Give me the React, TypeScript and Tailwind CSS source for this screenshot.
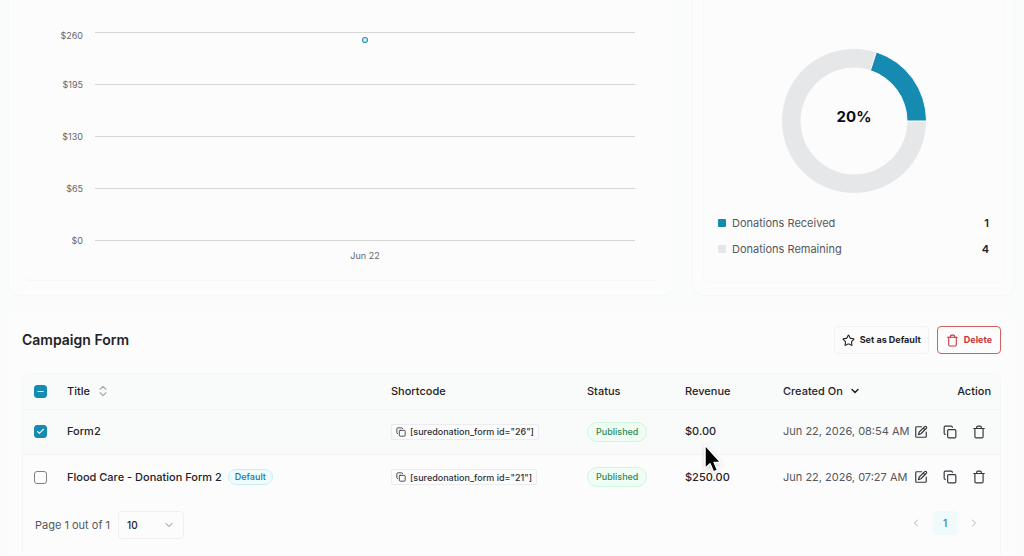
import { useState } from "react";
import {
  Check,
  ChevronDown,
  ChevronLeft,
  ChevronRight,
  ChevronsUpDown,
  Copy,
  Minus,
  Star,
  Trash,
} from "lucide-react";

type Form = {
  id: string;
  title: string;
  isDefault: boolean;
  revenue: string;
  created: string;
};

const forms: Form[] = [
  { id: "26", title: "Form2", isDefault: false, revenue: "$0.00", created: "Jun 22, 2026, 08:54 AM" },
  { id: "21", title: "Flood Care - Donation Form 2", isDefault: true, revenue: "$250.00", created: "Jun 22, 2026, 07:27 AM" },
];

const ticks = [
  { label: "$260", y: 32, text: 35 },
  { label: "$195", y: 84, text: 84 },
  { label: "$130", y: 136, text: 136 },
  { label: "$65", y: 188, text: 188 },
  { label: "$0", y: 240, text: 240 },
];

function RevenueChart() {
  return (
    <svg viewBox="0 0 638 280" className="block h-auto w-full" role="img" aria-label="Revenue">
      {ticks.map((t) => (
        <g key={t.label}>
          <line x1="73" x2="613" y1={t.y + 0.5} y2={t.y + 0.5} stroke="#d5d6d8" />
          <text x="61" y={t.text} textAnchor="end" dominantBaseline="central" fontSize="9" fill="#64676d">
            {t.label}
          </text>
        </g>
      ))}
      <circle cx="343" cy="40" r="2.5" fill="#d3f2fb" stroke="#3f93b0" strokeWidth="1.2" />
      <text x="343" y="255" textAnchor="middle" dominantBaseline="central" fontSize="9" fill="#64676d">
        Jun 22
      </text>
    </svg>
  );
}

function Donut() {
  return (
    <svg viewBox="0 0 146 146" className="mx-auto block size-[146px]" role="img" aria-label="20% of donations received">
      <g stroke="#fcfcfc" strokeWidth="1">
        <path d="M145.500 73A72.500 72.500 0 1 1 95.400 4L89.400 22.600A53 53 0 1 0 126 73Z" fill="#e5e7e9" />
        <path d="M145.500 73A72.500 72.500 0 0 0 95.400 4L89.400 22.600A53 53 0 0 1 126 73Z" fill="#168bb2" />
      </g>
      <text x="73" y="68" textAnchor="middle" dominantBaseline="central" fontSize="15" fontWeight="700" fill="#0b0d11">
        20%
      </text>
    </svg>
  );
}

function Tick({
  label,
  checked,
  mixed = false,
  onChange,
}: {
  label: string;
  checked: boolean;
  mixed?: boolean;
  onChange: () => void;
}) {
  const Icon = mixed ? Minus : Check;
  return (
    <span className="relative block size-[13px]">
      <input
        type="checkbox"
        aria-label={label}
        checked={checked}
        onChange={onChange}
        className="block size-[13px] appearance-none rounded-[3px] border border-[#7d8086] bg-[#fcfcfc] checked:border-[#168bb2] checked:bg-[#168bb2]"
      />
      {checked && (
        <Icon className="pointer-events-none absolute inset-0 m-auto size-[9px] text-[#e3f4f9]" strokeWidth={3} />
      )}
    </span>
  );
}

function EditIcon() {
  return (
    <svg viewBox="0 0 24 24" className="size-[14px]" fill="none" stroke="currentColor" strokeWidth="2" strokeLinecap="round" strokeLinejoin="round" aria-hidden="true">
      <path d="M13 3H4.500A1.500 1.500 0 0 0 3 4.500V19.500A1.500 1.500 0 0 0 4.500 21H19.500A1.500 1.500 0 0 0 21 19.500V12" />
      <path d="M18.400 2.900a1.900 1.900 0 0 1 2.700 2.700L12 15l-4.500 1.500L9 12Z" />
      <path d="M16 5.500 18.500 8" />
    </svg>
  );
}

export default function App() {
  const [selected, setSelected] = useState<string[]>(["26"]);
  const toggle = (id: string) =>
    setSelected((s) => (s.includes(id) ? s.filter((x) => x !== id) : [...s, id]));

  return (
    <main className="relative flex min-h-screen flex-col gap-4 overflow-hidden bg-[#fafcfb] pr-[9px] pl-2 font-['Inter',sans-serif] text-[11px] text-[#1f2227]">
      <div className="grid grid-cols-[666fr_323fr] gap-[18px]">
        <section className="rounded-b-xl border-x border-b border-[#f7f8f8] bg-[#fcfcfc] px-[13px] pb-[14px]">
          <div className="rounded-b-lg border-b border-[#f5f6f6]">
            <RevenueChart />
          </div>
        </section>
        <section className="flex rounded-b-xl border-x border-b border-[#f5f7f7] bg-[#fcfcfc] px-[10px] pb-3">
          <div className="flex-1 rounded-b-lg border-x border-b border-[#f7f9f9] px-[14px] pt-12">
            <Donut />
            <dl className="mt-4 flex flex-col">
              <div className="flex h-[26px] items-center gap-[6px]">
                <span className="size-2 rounded-[1px] bg-[#168bb2]" />
                <dt className="text-[#54575d]">Donations Received</dt>
                <dd className="ml-auto font-semibold">1</dd>
              </div>
              <div className="flex h-[26px] items-center gap-[6px]">
                <span className="size-2 rounded-[1px] bg-[#e5e7e9]" />
                <dt className="text-[#54575d]">Donations Remaining</dt>
                <dd className="ml-auto font-semibold">4</dd>
              </div>
            </dl>
          </div>
        </section>
      </div>

      <section className="flex-1 rounded-t-xl bg-[#fcfcfc] px-[14px] pt-[14px]">
        <header className="flex items-center gap-2">
          <h2 className="mr-auto text-sm font-semibold">Campaign Form</h2>
          <button type="button" className="flex h-7 items-center gap-[5px] rounded-[4px] border border-[#f0f1f2] px-[7px] text-[9px] font-bold">
            <Star className="size-[13px]" strokeWidth={2} />
            Set as Default
          </button>
          <button type="button" className="flex h-7 items-center gap-[5px] rounded-[4px] border border-[#cf6063] px-2 text-[9px] font-bold text-[#c6353b]">
            <Trash className="size-[13px]" strokeWidth={2} />
            Delete
          </button>
        </header>

        <div className="mt-[19px] rounded-t-lg border-x border-t border-[#f5f7f7]">
          <table className="w-full table-fixed border-collapse text-left">
            <thead className="bg-[#f9fbfb]">
              <tr className="h-[35px] border-b border-[#f2f6f6]">
                <th className="w-[44px] pl-[11px]">
                  <Tick
                    label="Select all forms"
                    checked={selected.length > 0}
                    mixed={selected.length < forms.length}
                    onChange={() => setSelected(selected.length ? [] : forms.map((f) => f.id))}
                  />
                </th>
                <th className="font-medium">
                  <span className="flex items-center gap-[6px]">
                    Title
                    <ChevronsUpDown className="size-[14px] text-[#a3a6aa]" strokeWidth={2} />
                  </span>
                </th>
                <th className="w-[196px] font-medium">Shortcode</th>
                <th className="w-[98px] font-medium">Status</th>
                <th className="w-[98px] font-medium">Revenue</th>
                <th className="w-[130px] font-medium">
                  <span className="flex items-center gap-[6px]">
                    Created On
                    <ChevronDown className="size-3" strokeWidth={3} />
                  </span>
                </th>
                <th className="w-[87px] pr-[9px] text-right font-medium">Action</th>
              </tr>
            </thead>
            <tbody>
              {forms.map((f) => {
                const on = selected.includes(f.id);
                return (
                  <tr key={f.id} className={on ? "h-[45px] border-b border-[#f2f4f4] bg-[#f9fbfb]" : "h-[46px]"}>
                    <td className="pl-[11px]">
                      <Tick label={`Select ${f.title}`} checked={on} onChange={() => toggle(f.id)} />
                    </td>
                    <td className="font-medium">
                      <span className="flex items-center gap-[6px]">
                        {f.title}
                        {f.isDefault && (
                          <span className="rounded-full border border-[#cdeef5] bg-[#f0fbfd] px-[6px] text-[9px] leading-[14px] text-[#1b7796]">
                            Default
                          </span>
                        )}
                      </span>
                    </td>
                    <td>
                      <button type="button" className="flex h-4 items-center gap-1 rounded-[2px] border border-[#ebecee] bg-[#fcfcfc] px-1 text-[9px] font-medium text-[#2c2f35]">
                        <Copy className="size-[10px]" strokeWidth={2} />
                        {`[suredonation_form id="${f.id}"]`}
                      </button>
                    </td>
                    <td>
                      <span className="inline-block rounded-full border border-[#ccf8dc] bg-[#f0fdf5] px-2 text-[9px] leading-[18px] font-medium text-[#2f8a50]">
                        Published
                      </span>
                    </td>
                    <td className="font-medium">{f.revenue}</td>
                    <td className="whitespace-nowrap text-[#54575d]">{f.created}</td>
                    <td className="pr-[14px]">
                      <div className="flex justify-end gap-[15px] text-[#33363c]">
                        <button type="button" aria-label={`Edit ${f.title}`}><EditIcon /></button>
                        <button type="button" aria-label={`Duplicate ${f.title}`}><Copy className="size-[14px]" strokeWidth={2} /></button>
                        <button type="button" aria-label={`Delete ${f.title}`}><Trash className="size-[14px]" strokeWidth={2} /></button>
                      </div>
                    </td>
                  </tr>
                );
              })}
            </tbody>
          </table>

          <footer className="flex items-center pt-[11px] pr-5 pb-4 pl-3 text-[#54575d]">
            <label htmlFor="page-size">Page 1 out of 1</label>
            <span className="relative ml-2">
              <select
                id="page-size"
                defaultValue="10"
                className="block h-7 w-[66px] appearance-none rounded-[4px] border border-[#eff0f1] bg-[#fcfcfc] pl-2 text-[10px] font-medium text-[#1f2227]"
              >
                <option>10</option>
                <option>20</option>
                <option>50</option>
              </select>
              <ChevronDown className="pointer-events-none absolute top-2 right-[9px] size-3 text-[#85888d]" />
            </span>
            <nav aria-label="Pagination" className="mb-1 ml-auto flex items-center gap-[11px] text-[#b0b3b8]">
              <button type="button" aria-label="Previous page"><ChevronLeft className="size-3" strokeWidth={2} /></button>
              <button type="button" aria-current="page" className="size-6 rounded-[2px] bg-[#effbfb] text-[10px] font-semibold text-[#4a93ac]">1</button>
              <button type="button" aria-label="Next page"><ChevronRight className="size-3" strokeWidth={2} /></button>
            </nav>
          </footer>
        </div>
      </section>

      <svg viewBox="0 0 24 34" className="pointer-events-none absolute top-[441px] left-[701px] h-[34px] w-6 drop-shadow-sm" aria-hidden="true">
        <path d="M4 4V27.500L9 22.800 12.500 31 16.500 29.300 13.200 21.500H19.800Z" fill="#000" stroke="#fff" strokeWidth="1.500" strokeLinejoin="round" />
      </svg>
    </main>
  );
}
